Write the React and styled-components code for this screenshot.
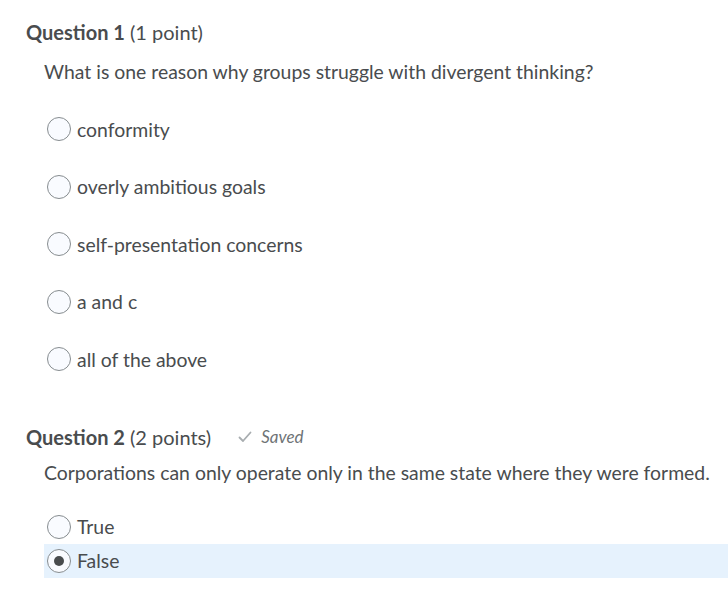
import React from "react";
import styled, { createGlobalStyle } from "styled-components";

const GlobalStyle = createGlobalStyle`
  body {
    margin: 0;
    background: #ffffff;
    font-family: Lato, "Open Sans", sans-serif;
    color: #494c4e;
  }
`;

export default function App() {
  const q1 = ["conformity", "overly ambitious goals", "self-presentation concerns", "a and c", "all of the above"];
  return (
    <>
      <GlobalStyle />
      <Page>
        <Question>
          <Header>
            <Strong>Question 1</Strong> (1 point)
          </Header>
          <Prompt>What is one reason why groups struggle with divergent thinking?</Prompt>
          <Options $top="27px">
            {q1.map((o) => (
              <Option key={o} $spaced>
                <Radio />
                <span>{o}</span>
              </Option>
            ))}
          </Options>
        </Question>

        <Question $second>
          <Header>
            <Strong>Question 2</Strong> (2 points)
            <Saved>
              <svg width="14" height="12" viewBox="0 0 14 12">
                <path d="M1.5 6.5 L5 10 L12.5 1.5" fill="none" stroke="#a8adb0" strokeWidth="1.8" strokeLinecap="round" strokeLinejoin="round" />
              </svg>
              <em>Saved</em>
            </Saved>
          </Header>
          <Prompt $tight>Corporations can only operate only in the same state where they were formed.</Prompt>
          <Options $top="24px">
            <Option>
              <Radio />
              <span>True</span>
            </Option>
            <Option $selected>
              <Radio $checked />
              <span>False</span>
            </Option>
          </Options>
        </Question>
      </Page>
    </>
  );
}

const Page = styled.div`
  padding: 19px 0 0 26px;
`;

const Question = styled.div`
  margin-top: ${(p) => (p.$second ? "24px" : "0")};
`;

const Header = styled.div`
  display: flex;
  align-items: center;
  font-size: 20px;
  height: 26px;
  white-space: pre;
`;

const Strong = styled.strong`
  font-weight: 700;
`;

const Saved = styled.span`
  display: inline-flex;
  align-items: center;
  gap: 9px;
  margin-left: 27px;
  font-size: 17px;
  color: #6e7376;
  em {
    font-style: italic;
  }
`;

const Prompt = styled.div`
  margin: ${(p) => (p.$tight ? "10px" : "14px")} 0 0 18px;
  font-size: 19.4px;
  line-height: 26px;
`;

const Options = styled.div`
  display: flex;
  flex-direction: column;
  margin-top: ${(p) => p.$top};
`;

const Option = styled.label`
  display: flex;
  align-items: center;
  gap: 6px;
  height: 34px;
  margin: 0 0 ${(p) => (p.$spaced ? "23.5px" : "0")} 18px;
  padding-left: 3px;
  font-size: 19.4px;
  background: ${(p) => (p.$selected ? "#e6f2fd" : "transparent")};
`;

const Radio = styled.span`
  box-sizing: border-box;
  flex: none;
  width: 24px;
  height: 24px;
  border-radius: 50%;
  border: 1px solid #868c8f;
  background: #f9fbff;
  display: flex;
  align-items: center;
  justify-content: center;
  &::after {
    content: "";
    display: ${(p) => (p.$checked ? "block" : "none")};
    width: 10px;
    height: 10px;
    border-radius: 50%;
    background: #494c4e;
  }
`;
